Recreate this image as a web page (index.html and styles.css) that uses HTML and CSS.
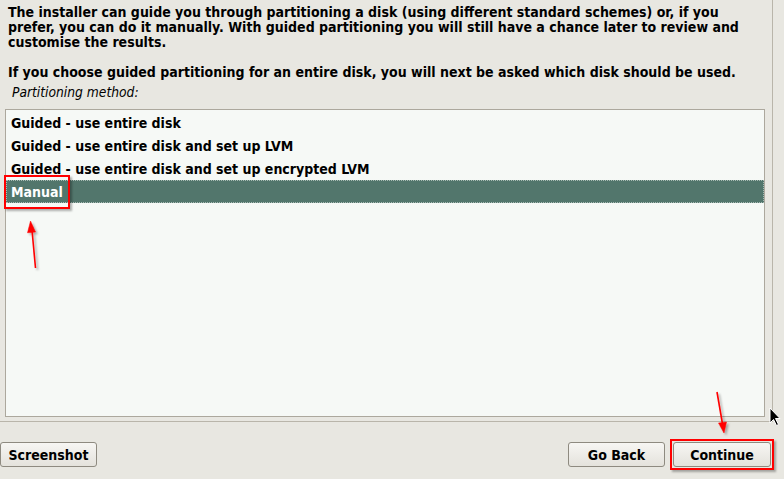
FILE: index.html
```html
<!DOCTYPE html>
<html lang="en">
<head>
    <meta charset="UTF-8">
    <meta name="viewport" content="width=device-width, initial-scale=1.0">
    <link rel="stylesheet" href="styles.css">
    <title>Partition disks</title>
</head>
<body>
    <div class="frame">
        <div class="intro">
            <p>The installer can guide you through partitioning a disk (using different standard schemes) or, if you prefer, you can do it manually. With guided partitioning you will still have a chance later to review and customise the results.</p>
            <p>If you choose guided partitioning for an entire disk, you will next be asked which disk should be used.</p>
        </div>
        <div class="label">Partitioning method:</div>
        <ul class="choices">
            <li>Guided - use entire disk</li>
            <li>Guided - use entire disk and set up LVM</li>
            <li>Guided - use entire disk and set up encrypted LVM</li>
            <li class="selected">Manual</li>
        </ul>
    </div>

    <div class="buttons">
        <button class="btn">Screenshot</button>
        <div class="right">
            <button class="btn">Go Back</button>
            <div class="marked"><button class="btn">Continue</button></div>
        </div>
    </div>

    <!-- annotations drawn over the screenshot -->
    <div class="mark-manual"></div>
    <svg class="overlay" width="784" height="479" viewBox="0 0 784 479">
        <defs>
            <filter id="shadow" x="-50%" y="-50%" width="200%" height="200%">
                <feDropShadow dx="2" dy="2" stdDeviation="1" flood-color="#000" flood-opacity="0.3"/>
            </filter>
        </defs>
        <g filter="url(#shadow)" fill="#ff0000" stroke="#ff0000">
            <line x1="35.5" y1="268" x2="32" y2="230" stroke-width="1.6"/>
            <path d="M30.5 221 L35.5 232 L27.5 232.8 Z" stroke-width="0.5"/>
            <line x1="717" y1="392" x2="722.5" y2="424" stroke-width="1.6"/>
            <path d="M724 433 L718.5 423 L726.5 422 Z" stroke-width="0.5"/>
        </g>
        <path d="M770 408 L770 423 L773.5 419.5 L776.5 425.5 L778.5 424.5 L775.5 418.5 L780 418.5 Z" fill="#000" stroke="#fff" stroke-width="1"/>
    </svg>
</body>
</html>
```

FILE: styles.css
```css
body {
  margin: 0;
  background: #e8e7e1;
  font-family: "DejaVu Sans Condensed", "DejaVu Sans", sans-serif;
  font-stretch: semi-condensed;
  font-size: 14px;
  color: #000;
  width: 784px;
  height: 479px;
  overflow: hidden;
  position: relative;
}

.frame {
  width: 773px;
  height: 422px;
  box-sizing: border-box;
  border-right: 1px solid #b9b5aa;
  border-bottom: 1px solid #b9b5aa;
  display: flex;
  flex-direction: column;
}

.intro {
  width: 745px;
  padding: 5px 8px 0 8px;
  font-weight: bold;
}

.intro p {
  margin: 0 0 15px 0;
  line-height: 15px;
}

.intro p:last-child {
  margin-bottom: 0;
}

.label {
  font-style: italic;
  font-size: 13.7px;
  padding: 5px 12px 0 12px;
  line-height: 15px;
  height: 15px;
}

.choices {
  list-style: none;
  margin: 9px 7px 4px 5px;
  padding: 1px 0 0 0;
  flex: 1;
  background: #f6f9f6;
  border: 1px solid #aca89d;
  font-weight: bold;
}

.choices li {
  height: 23px;
  line-height: 25px;
  padding-left: 5px;
}

.choices li.selected {
  background: #52766c;
  color: #fff;
  outline: 1px dotted #a9bbb4;
  outline-offset: -1px;
}

.buttons {
  display: flex;
  justify-content: space-between;
  align-items: center;
  margin-top: 17px;
}

.right {
  display: flex;
  align-items: center;
  gap: 5px;
  margin-right: 10px;
}

.btn {
  font-family: "DejaVu Sans Condensed", "DejaVu Sans", sans-serif;
  font-stretch: semi-condensed;
  font-size: 14px;
  font-weight: bold;
  color: #000;
  width: 97px;
  height: 25px;
  padding: 0;
  background: linear-gradient(#f7f6f3, #e4e2dc);
  border: 1px solid #8e8a80;
  border-radius: 3px;
}

.marked {
  border: 2px solid #ff0000;
  padding: 1px;
  box-shadow: 2px 2px 2px rgba(0,0,0,0.3);
}

.marked .btn {
  width: 98px;
}

.mark-manual {
  position: absolute;
  left: 4px;
  top: 175px;
  width: 62px;
  height: 30px;
  border: 2px solid #ff0000;
  box-shadow: 2px 2px 2px rgba(0,0,0,0.3);
}

.overlay {
  position: absolute;
  left: 0;
  top: 0;
  pointer-events: none;
}
```
